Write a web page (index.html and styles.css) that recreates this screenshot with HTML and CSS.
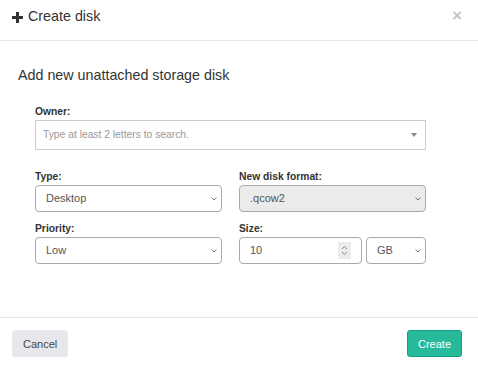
FILE: index.html
```html
<!DOCTYPE html>
<html lang="en">
<head>
    <meta charset="UTF-8">
    <meta name="viewport" content="width=device-width, initial-scale=1.0">
    <title>Create disk</title>
    <link rel="stylesheet" href="styles.css">
</head>
<body>
    <div class="modal">
        <div class="modal-header">
            <h4 class="modal-title">
                <svg class="icon-plus" width="11" height="11" viewBox="0 0 11 11"><path d="M4 0h3v4h4v3H7v4H4V7H0V4h4z"/></svg>
                Create disk
            </h4>
            <span class="close">&times;</span>
        </div>

        <div class="modal-body">
            <h3 class="lead">Add new unattached storage disk</h3>

            <form class="disk-form">
                <div class="field">
                    <label>Owner:</label>
                    <div class="search-box">
                        <span class="placeholder">Type at least 2 letters to search.</span>
                        <span class="caret"></span>
                    </div>
                </div>

                <div class="grid">
                    <div class="field">
                        <label>Type:</label>
                        <div class="select-wrap">
                            <select class="form-control">
                                <option>Desktop</option>
                            </select>
                            <svg class="chevron" width="6" height="4" viewBox="0 0 6 4"><path d="M0.5 0.5L3 3L5.5 0.5"/></svg>
                        </div>
                    </div>
                    <div class="field">
                        <label>New disk format:</label>
                        <div class="select-wrap">
                            <select class="form-control" disabled>
                                <option>.qcow2</option>
                            </select>
                            <svg class="chevron" width="6" height="4" viewBox="0 0 6 4"><path d="M0.5 0.5L3 3L5.5 0.5"/></svg>
                        </div>
                    </div>
                    <div class="field">
                        <label>Priority:</label>
                        <div class="select-wrap">
                            <select class="form-control">
                                <option>Low</option>
                            </select>
                            <svg class="chevron" width="6" height="4" viewBox="0 0 6 4"><path d="M0.5 0.5L3 3L5.5 0.5"/></svg>
                        </div>
                    </div>
                    <div class="field">
                        <label>Size:</label>
                        <div class="size-row">
                            <div class="number-wrap">
                                <input class="form-control" type="text" value="10">
                                <span class="spinner">
                                    <svg width="7" height="11" viewBox="0 0 7 11"><path d="M1 4l2.5-2.5L6 4M1 7l2.5 2.5L6 7" fill="none" stroke="#8a8a8a" stroke-width="1"/></svg>
                                </span>
                            </div>
                            <div class="select-wrap unit">
                                <select class="form-control">
                                    <option>GB</option>
                                </select>
                                <svg class="chevron" width="6" height="4" viewBox="0 0 6 4"><path d="M0.5 0.5L3 3L5.5 0.5"/></svg>
                            </div>
                        </div>
                    </div>
                </div>
            </form>
        </div>

        <div class="modal-footer">
            <button class="btn btn-default">Cancel</button>
            <button class="btn btn-success">Create</button>
        </div>
    </div>
</body>
</html>
```

FILE: styles.css
```css
:root {
    --text: #333;
    --border: #ccc;
    --green: #26b99a;
    --green-dark: #169f85;
}

body {
    margin: 0;
    padding: 0;
    background: #fff;
    color: var(--text);
    font-family: "Liberation Sans", Arial, sans-serif;
}

.modal {
    display: flex;
    flex-direction: column;
    height: 100vh;
}

.modal-header {
    display: flex;
    justify-content: space-between;
    align-items: flex-start;
    height: 41px;
    box-sizing: border-box;
    padding: 9px 16px 0 12px;
    border-bottom: 1px solid #e5e5e5;
}

.modal-title {
    margin: 0;
    font-size: 14.3px;
    font-weight: normal;
    line-height: 1.1;
    display: flex;
    align-items: center;
    gap: 5px;
}

.icon-plus {
    fill: #333;
    margin-top: 1px;
}

.close {
    font-size: 16.5px;
    font-weight: bold;
    line-height: 1;
    color: #c4c4c4;
    margin-top: -2px;
}

.modal-body {
    flex: 1;
    padding: 27px 18px 0;
}

.lead {
    margin: 0;
    font-size: 14.3px;
    font-weight: normal;
    line-height: 1.1;
}

.disk-form {
    margin: 21px 34px 0 17px;
}

.field label {
    display: block;
    font-size: 10.3px;
    font-weight: bold;
    line-height: 14px;
    margin-bottom: 1px;
}

.search-box {
    display: flex;
    align-items: center;
    justify-content: space-between;
    height: 30px;
    box-sizing: border-box;
    border: 1px solid var(--border);
    padding: 0 8px 0 7px;
}

.placeholder {
    font-size: 10.3px;
    color: #999;
}

.caret {
    width: 0;
    height: 0;
    border-left: 3px solid transparent;
    border-right: 3px solid transparent;
    border-top: 4px solid #888;
}

.grid {
    display: grid;
    grid-template-columns: 1fr 1fr;
    column-gap: 17px;
    row-gap: 10px;
    margin-top: 20px;
}

.form-control {
    display: block;
    width: 100%;
    height: 27px;
    box-sizing: border-box;
    padding: 0 6px;
    font-family: inherit;
    font-size: 11px;
    color: #555;
    background: #fff;
    border: 1px solid #aaa;
    border-radius: 4px;
}

select.form-control {
    appearance: none;
    padding-left: 10px;
}

.form-control:disabled {
    background: #ebebeb;
    color: #555;
    opacity: 1;
}

.select-wrap {
    position: relative;
}

.chevron {
    position: absolute;
    right: 5px;
    top: 12px;
    fill: none;
    stroke: #777;
    stroke-width: 1;
}

.size-row {
    display: flex;
    gap: 4px;
}

.number-wrap {
    position: relative;
    flex: 1;
}

.number-wrap .form-control {
    padding-left: 10px;
}

.spinner {
    position: absolute;
    top: 5px;
    right: 11px;
    width: 13px;
    height: 17px;
    background: #ececec;
    display: flex;
    align-items: center;
    justify-content: center;
}

.unit {
    width: 60px;
    flex: none;
}

.modal-footer {
    display: flex;
    justify-content: space-between;
    padding: 12px 16px 15px 12px;
    border-top: 1px solid #e5e5e5;
}

.btn {
    height: 27px;
    padding: 0 10px;
    font-family: inherit;
    font-size: 11px;
    border-radius: 3px;
    border: 1px solid transparent;
    cursor: pointer;
}

.btn-default {
    width: 56px;
    background: #e8e8ec;
    color: #444;
}

.btn-success {
    width: 55px;
    background: var(--green);
    border-color: var(--green-dark);
    color: #fff;
}
```
